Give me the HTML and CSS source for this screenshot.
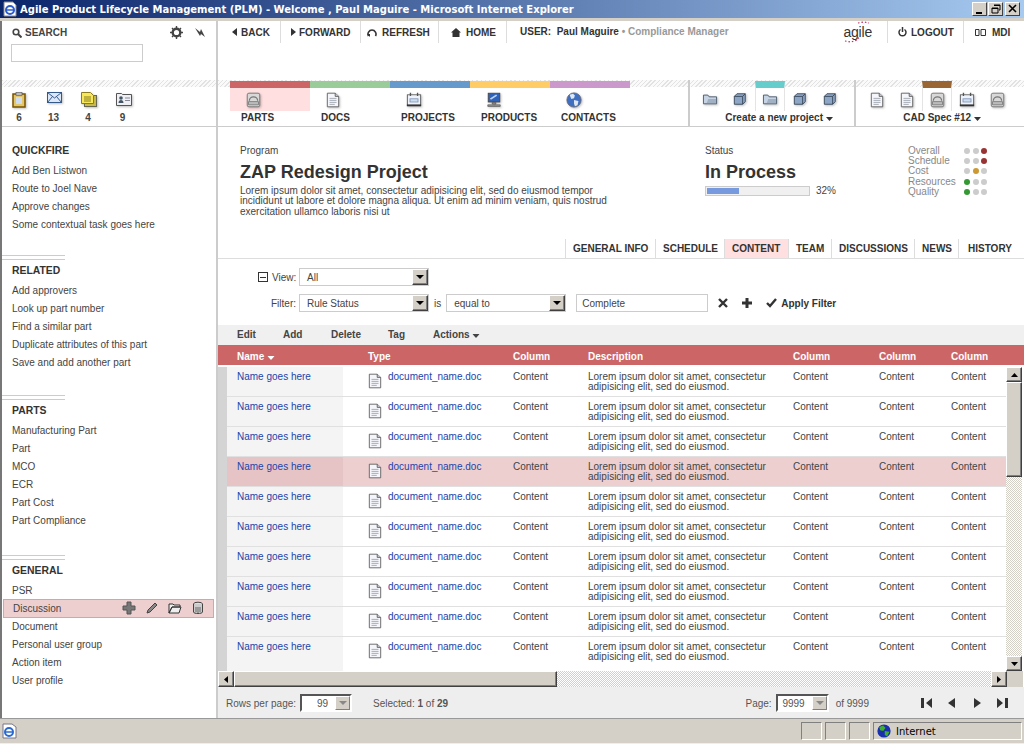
FILE: index.html
```html
<!DOCTYPE html>
<html>
  <head>
    <title>Agile Product Lifecycle Management (PLM)</title>
    <link rel="stylesheet" href="styles.css">
  </head>
  <body>
    <svg class="sprites" xmlns="http://www.w3.org/2000/svg">
      <symbol id="i-doc" viewBox="0 0 16 20" preserveAspectRatio="none">
        <path d="M1.500 1.500h9l4 4v13h-13z" fill="#f4f6fb" stroke="#555"/>
        <path d="M10.500 1.500v4h4" fill="#ccd" stroke="#555"/>
        <path d="M4 8h8M4 10.500h8M4 13h8M4 15.500h6" stroke="#9aa0aa"/>
      </symbol>
      <symbol id="i-disk" viewBox="0 0 18 20" preserveAspectRatio="none">
        <rect x="1.500" y="1.500" width="15" height="17" rx="2" fill="#d8d8d8" stroke="#666"/>
        <path d="M4 11a5 5 0 1 1 10 0" fill="none" stroke="#777" stroke-width="1.500"/>
        <path d="M3 12h12v4H3z" fill="#bbb" stroke="#777"/>
      </symbol>
      <symbol id="i-cal" viewBox="0 0 18 20" preserveAspectRatio="none">
        <rect x="1.500" y="3.500" width="15" height="14" fill="#eef3fb" stroke="#555"/>
        <rect x="4.500" y="8.500" width="9" height="4" fill="#cdddf0" stroke="#7f94b5"/>
        <path d="M5 1v4M13 1v4" stroke="#555" stroke-width="1.500"/>
        <path d="M1 16.500h16" stroke="#333" stroke-width="2"/>
      </symbol>
      <symbol id="i-monitor" viewBox="0 0 18 20" preserveAspectRatio="none">
        <rect x="2.500" y="1.500" width="13" height="11" fill="#2f62b8" stroke="#444"/>
        <path d="M5 9l7-5" stroke="#bcd2f2" stroke-width="2"/>
        <path d="M7 13h4v2H7zM2 16h14v2H2z" fill="#999" stroke="#444" stroke-width=".7"/>
      </symbol>
      <symbol id="i-globe" viewBox="0 0 18 18">
        <circle cx="9" cy="9" r="8" fill="#3f6fc0" stroke="#667"/>
        <path d="M4 3l4-1 2 2-1 3-3 1zM9 9l5 1-1 5-3 1-1-3z" fill="#dfe6f2"/>
      </symbol>
      <symbol id="i-folder" viewBox="0 0 18 16">
        <path d="M1.500 3.500h5l1.500 2h8.500v8h-15z" fill="#c6d3e4" stroke="#456"/>
        <path d="M7 8h9v5H5z" fill="#8a99ad" opacity=".6"/>
      </symbol>
      <symbol id="i-cube" viewBox="0 0 16 16">
        <path d="M1.500 5l3-3h9.500v9l-3 3H1.500z" fill="#8ea6c6" stroke="#345"/>
        <path d="M1.500 5h9.500v9M11 5l3-3" fill="none" stroke="#345"/>
      </symbol>
      <symbol id="i-arrow" viewBox="0 0 9 5"><path d="M0 0h9L4.500 5z" fill="currentColor"/></symbol>
    </svg>

    <div class="titlebar">
      <svg class="ie-mini" width="16" height="16" viewBox="0 0 16 16"><path d="M2 1h9l3 3v11H2z" fill="#fff" stroke="#888"/><circle cx="8" cy="9" r="4" fill="none" stroke="#2a5bd0" stroke-width="2"/><path d="M4 9h8" stroke="#2a5bd0" stroke-width="1.500"/></svg>
      <span class="title-text">Agile Product Lifecycle Management (PLM) - Welcome , Paul Maguire - Microsoft Internet Explorer</span>
      <div class="win-buttons">
        <span class="win-btn"><svg width="10" height="10"><path d="M1 8h6v2H1z" fill="#000"/></svg></span>
        <span class="win-btn"><svg width="10" height="10"><path d="M3 1h6v5H8M1 4h6v5H1zM3 1.500h6" fill="none" stroke="#000" stroke-width="1"/><path d="M1 4h6v1H1zM3 1h6v1H3z" fill="#000"/></svg></span>
        <span class="win-btn win-close"><svg width="10" height="10"><path d="M1 1l7 7M8 1L1 8" stroke="#000" stroke-width="1.600"/></svg></span>
      </div>
    </div>

    <div class="frame">
      <aside class="sidebar">
        <div class="search-box">
          <div class="search-head">
            <svg width="10" height="10" viewBox="0 0 10 10"><circle cx="4" cy="4" r="2.800" fill="none" stroke="#444" stroke-width="1.600"/><path d="M6 6l3.500 3.500" stroke="#444" stroke-width="2"/></svg>
            <span class="search-label">SEARCH</span>
            <svg class="gear" width="13" height="13" viewBox="0 0 13 13"><circle cx="6.500" cy="6.500" r="3.800" fill="none" stroke="#444" stroke-width="2.400"/><path d="M6.500 0v13M0 6.500h13M2 2l9 9M11 2l-9 9" stroke="#444" stroke-width="1.400" stroke-dasharray="2 9"/></svg>
            <svg class="pin" width="12" height="12" viewBox="0 0 12 12"><path d="M1 1l5 4 1-3 4 8-4-3-1 2z" fill="#444"/></svg>
          </div>
          <div class="search-input"></div>
        </div>
        <div class="hatch"></div>
        <div class="badges">
          <div class="badge">
            <svg width="14" height="16" viewBox="0 0 14 16"><rect x="1" y="2" width="12" height="13" fill="#e4c66a" stroke="#7a5200" stroke-width="1.500"/><rect x="4" y="5" width="6" height="7" fill="#cfdcf0"/><rect x="4" y="0.500" width="6" height="3" fill="#bbb" stroke="#555" stroke-width=".6"/></svg>
            <span>6</span>
          </div>
          <div class="badge">
            <svg width="15" height="12" viewBox="0 0 15 12"><rect x=".5" y=".5" width="14" height="10" fill="#dce8f8" stroke="#345a8c"/><path d="M.5.500l7 5.500 7-5.500M.5 10.500l5-6M14.500 10.500l-5-6" fill="none" stroke="#345a8c"/></svg>
            <span>13</span>
          </div>
          <div class="badge">
            <svg width="16" height="15" viewBox="0 0 16 15"><rect x="3.500" y="3.500" width="12" height="11" fill="#c8b84a" stroke="#665"/><path d="M.5.500h9l3 3v8H.5z" fill="#f6e85a" stroke="#8a7a20"/><path d="M3 5h7M3 7h7M3 9h7" stroke="#8a7a20"/></svg>
            <span>4</span>
          </div>
          <div class="badge">
            <svg width="16" height="14" viewBox="0 0 16 14"><path d="M.5 1.500h5l1 1h9v11H.5z" fill="#eef0f4" stroke="#555"/><circle cx="5" cy="6" r="1.800" fill="#456"/><path d="M2.500 11c0-4 5-4 5 0z" fill="#456"/><path d="M9 6h5M9 8.500h5" stroke="#889"/></svg>
            <span>9</span>
          </div>
        </div>

        <div class="side-nav">
          <section class="side-section">
            <h3>QUICKFIRE</h3>
            <a class="side-item">Add Ben Listwon</a>
            <a class="side-item">Route to Joel Nave</a>
            <a class="side-item">Approve changes</a>
            <a class="side-item">Some contextual task goes here</a>
          </section>
          <section class="side-section side-ruled side-related">
            <h3>RELATED</h3>
            <a class="side-item">Add approvers</a>
            <a class="side-item">Look up part number</a>
            <a class="side-item">Find a similar part</a>
            <a class="side-item">Duplicate attributes of this part</a>
            <a class="side-item">Save and add another part</a>
          </section>
          <section class="side-section side-ruled side-parts">
            <h3>PARTS</h3>
            <a class="side-item">Manufacturing Part</a>
            <a class="side-item">Part</a>
            <a class="side-item">MCO</a>
            <a class="side-item">ECR</a>
            <a class="side-item">Part Cost</a>
            <a class="side-item">Part Compliance</a>
          </section>
          <section class="side-section side-ruled">
            <h3>GENERAL</h3>
            <a class="side-item">PSR</a>
            <a class="side-item side-active">
              <span>Discussion</span>
              <span class="side-tools">
                <svg width="14" height="14" viewBox="0 0 14 14"><path d="M5 1h4v4h4v4H9v4H5V9H1V5h4z" fill="#777" stroke="#555"/></svg>
                <svg width="14" height="14" viewBox="0 0 14 14"><path d="M2 12l1-3 7-7 2 2-7 7z" fill="#888" stroke="#444"/></svg>
                <svg width="14" height="14" viewBox="0 0 14 14"><path d="M1 3h4l1 1h6v2H4l-3 6zM4 6h9l-2 6H1z" fill="#eee" stroke="#333"/></svg>
                <svg width="14" height="14" viewBox="0 0 14 14"><ellipse cx="7" cy="3" rx="4.500" ry="1.800" fill="#ddd" stroke="#444"/><path d="M2.500 3v8c0 2 9 2 9 0V3" fill="#ccc" stroke="#444"/><path d="M5 6v5M7 6v6M9 6v5" stroke="#666"/></svg>
              </span>
            </a>
            <a class="side-item">Document</a>
            <a class="side-item">Personal user group</a>
            <a class="side-item">Action item</a>
            <a class="side-item">User profile</a>
          </section>
        </div>
      </aside>

      <main class="content">
        <div class="topnav">
          <a class="top-link back"><svg width="5" height="8"><path d="M5 0v8L0 4z" fill="#333"/></svg>BACK</a>
          <a class="top-link forward"><svg width="5" height="8"><path d="M0 0v8l5-4z" fill="#333"/></svg>FORWARD</a>
          <a class="top-link refresh"><svg width="10" height="10" viewBox="0 0 10 10"><path d="M1.500 9a4 4 0 1 1 7 0" fill="none" stroke="#333" stroke-width="1.600"/><path d="M0 7h3v3z" fill="#333"/></svg>REFRESH</a>
          <a class="top-link home"><svg width="10" height="9" viewBox="0 0 10 9"><path d="M5 0l5 4.500H8.500V9h-7V4.500H0z" fill="#333"/></svg>HOME</a>
          <span class="user"><span class="user-key">USER:</span>  <b>Paul Maguire</b> <span class="user-role">&bull; Compliance Manager</span></span>
          <span class="logo">agile
            <svg class="logo-dots" width="30" height="22" viewBox="0 0 30 22"><path d="M16 2l6-1 5 1M3 20l6 1 6-2 3-4" fill="none" stroke="#c8245a" stroke-width="1.200" stroke-dasharray="1.500 2"/></svg>
          </span>
          <a class="top-link logout"><svg width="9" height="10" viewBox="0 0 9 10"><path d="M2.500 2.500a3.500 3.500 0 1 0 4 0" fill="none" stroke="#333" stroke-width="1.500"/><path d="M4.500 0v5" stroke="#333" stroke-width="1.500"/></svg>LOGOUT</a>
          <a class="top-link mdi"><svg width="11" height="7"><path d="M.5.500h3.500v6H.5zM6 .500h4.500v6H6z" fill="none" stroke="#333"/></svg>MDI</a>
        </div>

        <div class="modules">
          <div class="module-tabs">
            <a class="module module-active"><i class="band band-red"></i><span class="module-icon"><svg width="15" height="16"><use href="#i-disk"/></svg></span><b>PARTS</b></a>
            <a class="module"><i class="band band-green"></i><span class="module-icon"><svg width="14" height="16"><use href="#i-doc"/></svg></span><b>DOCS</b></a>
            <a class="module"><i class="band band-blue"></i><span class="module-icon"><svg width="16" height="16"><use href="#i-cal"/></svg></span><b>PROJECTS</b></a>
            <a class="module"><i class="band band-orange"></i><span class="module-icon"><svg width="16" height="16"><use href="#i-monitor"/></svg></span><b>PRODUCTS</b></a>
            <a class="module"><i class="band band-purple"></i><span class="module-icon"><svg width="16" height="16"><use href="#i-globe"/></svg></span><b>CONTACTS</b></a>
          </div>
          <div class="tool-group tool-create">
            <div class="tool-icons">
              <span class="tool"><svg width="16" height="14"><use href="#i-folder"/></svg></span>
              <span class="tool"><svg width="14" height="14"><use href="#i-cube"/></svg></span>
              <span class="tool tool-on tool-teal"><svg width="16" height="14"><use href="#i-folder"/></svg></span>
              <span class="tool"><svg width="14" height="14"><use href="#i-cube"/></svg></span>
              <span class="tool"><svg width="14" height="14"><use href="#i-cube"/></svg></span>
            </div>
            <div class="tool-label">Create a new project <svg width="7" height="4" viewBox="0 0 9 5"><use href="#i-arrow"/></svg></div>
          </div>
          <div class="tool-group tool-cad">
            <div class="tool-icons">
              <span class="tool"><svg width="14" height="16"><use href="#i-doc"/></svg></span>
              <span class="tool"><svg width="14" height="16"><use href="#i-doc"/></svg></span>
              <span class="tool tool-on tool-brown"><svg width="15" height="16"><use href="#i-disk"/></svg></span>
              <span class="tool"><svg width="16" height="16"><use href="#i-cal"/></svg></span>
              <span class="tool"><svg width="15" height="16"><use href="#i-disk"/></svg></span>
            </div>
            <div class="tool-label">CAD Spec #12 <svg width="7" height="4" viewBox="0 0 9 5"><use href="#i-arrow"/></svg></div>
          </div>
        </div>

        <div class="summary">
          <div class="summary-main">
            <div class="field-label">Program</div>
            <h1>ZAP Redesign Project</h1>
            <p>Lorem ipsum dolor sit amet, consectetur adipisicing elit, sed do eiusmod tempor incididunt ut labore et dolore magna aliqua. Ut enim ad minim veniam, quis nostrud exercitation ullamco laboris nisi ut</p>
          </div>
          <div class="summary-status">
            <div class="field-label">Status</div>
            <h1>In Process</h1>
            <div class="progress-line">
              <div class="progress"><div class="progress-fill" style="width: 32%"></div></div>
              <span>32%</span>
            </div>
          </div>
          <div class="health">
            <span>Overall</span><span class="dots"><i></i><i></i><i class="dot-red"></i></span>
            <span>Schedule</span><span class="dots"><i></i><i></i><i class="dot-red"></i></span>
            <span>Cost</span><span class="dots"><i></i><i class="dot-amber"></i><i></i></span>
            <span>Resources</span><span class="dots"><i class="dot-green"></i><i></i><i></i></span>
            <span>Quality</span><span class="dots"><i class="dot-green"></i><i></i><i></i></span>
          </div>
        </div>

        <div class="tabs">
          <a class="tab tab-general">GENERAL INFO</a>
          <a class="tab tab-schedule">SCHEDULE</a>
          <a class="tab tab-content tab-active">CONTENT</a>
          <a class="tab tab-team">TEAM</a>
          <a class="tab tab-discussions">DISCUSSIONS</a>
          <a class="tab tab-news">NEWS</a>
          <a class="tab tab-history">HISTORY</a>
        </div>

        <div class="filters">
          <div class="filter-row">
            <span class="collapse"></span>
            <span class="filter-key key-view">View:</span>
            <span class="select"><span class="select-value">All</span><span class="select-btn"></span></span>
          </div>
          <div class="filter-row">
            <span class="filter-key">Filter:</span>
            <span class="select"><span class="select-value">Rule Status</span><span class="select-btn"></span></span>
            <span class="filter-is">is</span>
            <span class="select select-op"><span class="select-value">equal to</span><span class="select-btn"></span></span>
            <span class="filter-input">Complete</span>
            <svg class="filter-x" width="10" height="10"><path d="M1 1l8 8M9 1L1 9" stroke="#333" stroke-width="2.400"/></svg>
            <svg class="filter-plus" width="10" height="10"><path d="M5 0v10M0 5h10" stroke="#333" stroke-width="3"/></svg>
            <svg class="filter-check" width="11" height="10"><path d="M1 5l3 3 6-7" fill="none" stroke="#333" stroke-width="2.400"/></svg>
            <b class="filter-apply">Apply Filter</b>
          </div>
        </div>

        <div class="actions">
          <a class="act-edit">Edit</a><a class="act-add">Add</a><a class="act-delete">Delete</a><a class="act-tag">Tag</a><a>Actions <svg width="8" height="4" viewBox="0 0 9 5"><use href="#i-arrow"/></svg></a>
        </div>

        <div class="thead">
          <span>Name <svg width="8" height="4" viewBox="0 0 9 5"><use href="#i-arrow"/></svg></span><span>Type</span><span>Column</span><span>Description</span><span>Column</span><span>Column</span><span>Column</span>
        </div>

        <div class="grid-wrap">
          <div class="rows">
            <div class="row"><a class="cell-name">Name goes here</a><span class="cell-type"><svg width="14" height="16"><use href="#i-doc"/></svg><a>document_name.doc</a></span><span>Content</span><span>Lorem ipsum dolor sit amet, consectetur adipisicing elit, sed do eiusmod.</span><span>Content</span><span>Content</span><span>Content</span></div>
            <div class="row"><a class="cell-name">Name goes here</a><span class="cell-type"><svg width="14" height="16"><use href="#i-doc"/></svg><a>document_name.doc</a></span><span>Content</span><span>Lorem ipsum dolor sit amet, consectetur adipisicing elit, sed do eiusmod.</span><span>Content</span><span>Content</span><span>Content</span></div>
            <div class="row"><a class="cell-name">Name goes here</a><span class="cell-type"><svg width="14" height="16"><use href="#i-doc"/></svg><a>document_name.doc</a></span><span>Content</span><span>Lorem ipsum dolor sit amet, consectetur adipisicing elit, sed do eiusmod.</span><span>Content</span><span>Content</span><span>Content</span></div>
            <div class="row row-selected"><a class="cell-name">Name goes here</a><span class="cell-type"><svg width="14" height="16"><use href="#i-doc"/></svg><a>document_name.doc</a></span><span>Content</span><span>Lorem ipsum dolor sit amet, consectetur adipisicing elit, sed do eiusmod.</span><span>Content</span><span>Content</span><span>Content</span></div>
            <div class="row"><a class="cell-name">Name goes here</a><span class="cell-type"><svg width="14" height="16"><use href="#i-doc"/></svg><a>document_name.doc</a></span><span>Content</span><span>Lorem ipsum dolor sit amet, consectetur adipisicing elit, sed do eiusmod.</span><span>Content</span><span>Content</span><span>Content</span></div>
            <div class="row"><a class="cell-name">Name goes here</a><span class="cell-type"><svg width="14" height="16"><use href="#i-doc"/></svg><a>document_name.doc</a></span><span>Content</span><span>Lorem ipsum dolor sit amet, consectetur adipisicing elit, sed do eiusmod.</span><span>Content</span><span>Content</span><span>Content</span></div>
            <div class="row"><a class="cell-name">Name goes here</a><span class="cell-type"><svg width="14" height="16"><use href="#i-doc"/></svg><a>document_name.doc</a></span><span>Content</span><span>Lorem ipsum dolor sit amet, consectetur adipisicing elit, sed do eiusmod.</span><span>Content</span><span>Content</span><span>Content</span></div>
            <div class="row"><a class="cell-name">Name goes here</a><span class="cell-type"><svg width="14" height="16"><use href="#i-doc"/></svg><a>document_name.doc</a></span><span>Content</span><span>Lorem ipsum dolor sit amet, consectetur adipisicing elit, sed do eiusmod.</span><span>Content</span><span>Content</span><span>Content</span></div>
            <div class="row"><a class="cell-name">Name goes here</a><span class="cell-type"><svg width="14" height="16"><use href="#i-doc"/></svg><a>document_name.doc</a></span><span>Content</span><span>Lorem ipsum dolor sit amet, consectetur adipisicing elit, sed do eiusmod.</span><span>Content</span><span>Content</span><span>Content</span></div>
            <div class="row"><a class="cell-name">Name goes here</a><span class="cell-type"><svg width="14" height="16"><use href="#i-doc"/></svg><a>document_name.doc</a></span><span>Content</span><span>Lorem ipsum dolor sit amet, consectetur adipisicing elit, sed do eiusmod.</span><span>Content</span><span>Content</span><span>Content</span></div>
          </div>
          <div class="vscroll">
            <span class="sb-btn"><svg width="7" height="4"><path d="M3.500 0L7 4H0z" fill="#000"/></svg></span>
            <span class="sb-thumb"></span>
            <span class="sb-track"></span>
            <span class="sb-btn"><svg width="7" height="4"><path d="M0 0h7L3.500 4z" fill="#000"/></svg></span>
          </div>
        </div>
        <div class="hscroll">
          <span class="sb-btn"><svg width="4" height="7"><path d="M4 0v7L0 3.500z" fill="#000"/></svg></span>
          <span class="sb-hthumb"></span>
          <span class="sb-htrack"></span>
          <span class="sb-btn"><svg width="4" height="7"><path d="M0 0v7l4-3.500z" fill="#000"/></svg></span>
          <span class="sb-corner"></span>
        </div>

        <div class="pager">
          <span class="rows-label">Rows per page:</span>
          <span class="combo combo-rows"><span>99</span><i class="combo-btn"></i></span>
          <span class="selected">Selected: <b>1</b> of <b>29</b></span>
          <span class="page-label">Page:</span>
          <span class="combo combo-page"><span>9999</span><i class="combo-btn"></i></span>
          <span class="page-of">of 9999</span>
          <span class="page-nav">
            <svg width="11" height="10"><path d="M0 0h3v10H0zM11 0v10L5 5z" fill="#333"/></svg>
            <svg width="7" height="10"><path d="M7 0v10L0 5z" fill="#333"/></svg>
            <svg class="nav-next" width="7" height="10"><path d="M0 0v10l7-5z" fill="#333"/></svg>
            <svg width="11" height="10"><path d="M8 0h3v10H8zM0 0v10l6-5z" fill="#333"/></svg>
          </span>
        </div>
      </main>
    </div>

    <div class="statusbar">
      <span class="status-ie">
        <svg width="15" height="16" viewBox="0 0 15 16"><path d="M1 1h9l4 3v11H1z" fill="#fff" stroke="#778"/><circle cx="7" cy="9" r="4" fill="none" stroke="#2a6ad0" stroke-width="2"/><path d="M3 9h8" stroke="#2a6ad0" stroke-width="1.500"/></svg>
      </span>
      <span class="status-fill"></span>
      <span class="status-cell"></span>
      <span class="status-cell"></span>
      <span class="status-cell"></span>
      <span class="status-zone">
        <svg width="14" height="14" viewBox="0 0 18 18"><circle cx="9" cy="9" r="8.500" fill="#1a2fb0"/><path d="M3 4l5-2 3 3-3 4-4-1zM10 9l6 1-3 6-3-2z" fill="#3fae2a"/></svg>
        Internet
      </span>
    </div>
  </body>
</html>
```

FILE: styles.css
```css
* {
  box-sizing: border-box;
}
html,
body {
  margin: 0;
  height: 744px;
  overflow: hidden;
}
body {
  width: 1024px;
  display: flex;
  flex-direction: column;
  background: #d4d0c8;
  font-family: "Liberation Sans", Arial, sans-serif;
  font-size: 10px;
  color: #444;
}
a {
  color: inherit;
}
svg {
  flex: none;
}
.sprites {
  display: none;
}

/* window chrome */
.titlebar {
  height: 18px;
  flex: none;
  display: flex;
  align-items: center;
  padding-left: 2px;
  background: linear-gradient(90deg, #0a246a, #a6caf0);
  color: #fff;
}
.title-text {
  margin-left: 2px;
  font-family: "DejaVu Sans", sans-serif;
  font-weight: bold;
  font-size: 10px;
  white-space: nowrap;
}
.win-buttons {
  margin-left: auto;
  margin-right: 4px;
  display: flex;
  gap: 1px;
}
.win-btn {
  width: 15px;
  height: 14px;
  display: flex;
  align-items: center;
  justify-content: center;
  background: #d4d0c8;
  border: 1px solid;
  border-color: #fff #404040 #404040 #fff;
}
.win-close {
  margin-left: 1px;
}
.frame {
  flex: none;
  height: 697px;
  margin-top: 3px;
  padding-left: 2px;
  padding-right: 2px;
  display: flex;
  background: #ececec;
  box-shadow: inset 2px 0 #777;
}

/* left column */
.sidebar {
  width: 214px;
  flex: none;
  background: #fff;
}
.search-box {
  height: 59px;
  padding: 6px 10px 0 9px;
}
.search-head {
  display: flex;
  align-items: center;
  height: 11px;
  gap: 3px;
  padding-left: 1px;
}
.search-label {
  font-weight: bold;
}
.gear {
  margin-left: auto;
  margin-right: 8px;
}
.search-input {
  width: 132px;
  height: 18px;
  margin-top: 6px;
  border: 1px solid #ccc;
}
.hatch {
  height: 7px;
  background: repeating-linear-gradient(135deg, #e2e2e2 0 1px, #fafafa 1px 3px);
}
.badges {
  height: 40px;
  display: flex;
  padding-left: 10px;
  border-bottom: 1px solid #ccc;
}
.badge {
  width: 34.500px;
  padding-top: 5px;
  display: flex;
  flex-direction: column;
  align-items: flex-start;
}
.badge svg,
.module-icon svg,
.tool svg {
  filter: drop-shadow(1px 1px 1px rgba(0, 0, 0, .25));
}
.badge span {
  margin-top: auto;
  margin-bottom: 3px;
  width: 14px;
  text-align: center;
  font-weight: bold;
}
.side-nav {
  padding-top: 14px;
}
.side-section {
  margin-bottom: 22px;
}
.side-related {
  margin-bottom: 24px;
}
.side-parts {
  margin-bottom: 26px;
}
.side-ruled::before {
  content: "";
  display: block;
  width: 63px;
  height: 3px;
  margin-bottom: 1px;
  border-top: 1px solid #ccc;
  border-bottom: 1px solid #ccc;
}
.side-section h3 {
  margin: 0;
  padding-left: 10px;
  font-size: 10.400px;
  line-height: 20px;
  color: #333;
}
.side-item {
  display: flex;
  align-items: center;
  height: 18px;
  padding-left: 10px;
}
.side-active {
  margin-left: 1px;
  width: 211px;
  height: 19px;
  margin-bottom: -1px;
  padding: 0 0 1px 9px;
  background: #eecfd0;
  border: 1px solid #d5a5a5;
}
.side-tools {
  margin-left: auto;
  display: flex;
  gap: 9px;
  padding-right: 8px;
}

/* main column */
.content {
  width: 806px;
  flex: none;
  display: flex;
  flex-direction: column;
  background: #fff;
  box-shadow: -2px 0 #ccc;
  margin-left: 2px;
}
.topnav {
  height: 59px;
  display: flex;
  align-items: flex-start;
  font-weight: bold;
  color: #333;
}
.top-link {
  height: 22px;
  display: flex;
  align-items: center;
  gap: 5px;
  border-right: 1px solid #ddd;
}
.back {
  width: 63px;
  padding-left: 14px;
  gap: 4px;
}
.forward {
  width: 80px;
  padding-left: 10px;
  gap: 3px;
}
.refresh {
  width: 78px;
  padding-left: 6px;
}
.home {
  width: 68px;
  padding-left: 12px;
}
.user {
  margin-left: 13px;
  line-height: 22px;
  white-space: pre;
}
.user-role {
  color: #999;
}
.logo {
  position: relative;
  margin-left: auto;
  margin-right: 15px;
  font-size: 14px;
  font-weight: normal;
  line-height: 22px;
  letter-spacing: -.2px;
}
.logo-dots {
  position: absolute;
  left: -1px;
  top: 0;
}
.logout {
  width: 77px;
  padding-left: 10px;
  gap: 4px;
  border-left: 1px solid #ddd;
}
.mdi {
  width: 60px;
  padding-left: 11px;
  gap: 6px;
  border: 0;
}
.modules {
  height: 47px;
  display: flex;
  background: repeating-linear-gradient(135deg, #e2e2e2 0 1px, #fafafa 1px 3px) 0 0 / 100% 7px no-repeat #fff;
  border-bottom: 1px solid #ccc;
}
.module-tabs {
  display: flex;
  margin-left: 12px;
  width: 458px;
}
.module {
  width: 80px;
  padding-top: 1px;
}
.module b {
  display: block;
  margin-left: 11px;
  margin-top: 1px;
  line-height: 12px;
  color: #333;
}
.band {
  display: block;
  height: 7px;
}
.band-red {
  background: #cc6666;
}
.band-green {
  background: #99cc99;
}
.band-blue {
  background: #6699cc;
}
.band-orange {
  background: #ffcc66;
}
.band-purple {
  background: #cc99cc;
}
.module-icon {
  display: flex;
  height: 23px;
  padding-left: 16px;
  padding-top: 4px;
}
.module-active .module-icon {
  background: #ffdfdf;
}
.tool-group {
  width: 166px;
  border-left: 2px solid #ccc;
}
.tool-cad {
  width: 168px;
}
.tool-icons {
  height: 31px;
  display: flex;
  padding-left: 5px;
}
.tool-cad .tool-icons {
  padding-left: 6px;
}
.tool {
  width: 30px;
  padding-top: 12px;
  display: flex;
  justify-content: center;
}
.tool-on {
  margin-top: 1px;
  border: solid #e4e4e4;
  border-width: 0 1px;
  border-top: 7px solid;
  padding-top: 4px;
}
.tool-teal {
  border-top-color: #66cccc;
}
.tool-brown {
  border-top-color: #996633;
}
.tool-label {
  margin-top: 1px;
  padding-left: 14px;
  text-align: center;
  font-weight: bold;
  line-height: 12px;
  color: #333;
}
.tool-cad .tool-label {
  padding-left: 6px;
}
.summary {
  height: 112px;
  display: flex;
  padding: 18px 0 0 22px;
}
.summary-main {
  width: 465px;
}
.summary-status {
  width: 203px;
}
.field-label {
  line-height: 12px;
}
h1 {
  margin: 4px 0 3px;
  font-size: 18px;
  line-height: 22px;
  color: #333;
}
.summary p {
  margin: 0;
  width: 375px;
  line-height: 10.400px;
}
.progress-line {
  display: flex;
  align-items: center;
  gap: 6px;
  margin-top: -1px;
}
.progress {
  width: 105px;
  height: 10px;
  padding: 1px;
  background: #f0f0f0;
  border: 1px solid #ccc;
}
.progress-fill {
  height: 100%;
  background: #7799dd;
}
.health {
  display: grid;
  grid-template-columns: 56px auto;
  justify-content: start;
  margin-top: 1px;
  line-height: 10.100px;
  height: 51px;
  color: #888;
}
.dots {
  display: flex;
  align-items: center;
  gap: 2.500px;
}
.dots i {
  width: 6px;
  height: 6px;
  border-radius: 50%;
  background: #ccc;
}
.dots .dot-red {
  background: #993333;
}
.dots .dot-amber {
  background: #cc9933;
}
.dots .dot-green {
  background: #339933;
}
.tabs {
  height: 20px;
  flex: none;
  display: flex;
  justify-content: flex-end;
  border-bottom: 1px solid #ddd;
  font-weight: bold;
  color: #333;
}
.tab {
  height: 19px;
  line-height: 20px;
  border-left: 1px solid #ddd;
  padding-left: 7px;
}
.tab-general {
  width: 90px;
}
.tab-schedule {
  width: 69px;
}
.tab-content {
  width: 64px;
}
.tab-team {
  width: 43px;
}
.tab-discussions {
  width: 83px;
}
.tab-news {
  width: 44px;
}
.tab-history {
  width: 66px;
  padding-left: 9px;
}
.tab-active {
  background: #ffdfdf;
}
.filters {
  height: 66px;
  padding-top: 9px;
  padding-left: 40px;
  display: flex;
  flex-direction: column;
  gap: 8px;
}
.filter-row {
  display: flex;
  align-items: center;
  height: 18px;
}
.collapse {
  width: 10px;
  height: 10px;
  margin-right: 4px;
  border: 1px solid #333;
  background: linear-gradient(#333, #333) center / 6px 1px no-repeat;
}
.filter-key {
  width: 38px;
  margin-right: 3px;
  padding-top: 1px;
  text-align: right;
}
.key-view {
  width: 24px;
}
.select {
  width: 130px;
  height: 18px;
  display: flex;
  align-items: stretch;
  border: 1px solid #ccc;
}
.select-value {
  flex: 1;
  padding-left: 7px;
  line-height: 17px;
}
.select-btn {
  width: 16px;
  background: #d4d0c8;
  border: 1px solid;
  border-color: #fff #404040 #404040 #fff;
  box-shadow: inset -1px -1px #808080;
  position: relative;
}
.select-btn::after {
  content: "";
  position: absolute;
  left: 3px;
  top: 5px;
  border: 4px solid transparent;
  border-top: 4px solid #000;
  border-bottom: 0;
}
.filter-is {
  margin: 0 5px;
  padding-top: 1px;
}
.select-op {
  width: 120px;
}
.filter-input {
  width: 132px;
  height: 18px;
  margin-left: 10px;
  padding-left: 5px;
  line-height: 17px;
  border: 1px solid #ccc;
}
.filter-x {
  margin-left: 10px;
}
.filter-plus {
  margin-left: 14px;
}
.filter-check {
  margin-left: 14px;
}
.filter-apply {
  margin-left: 4px;
  padding-top: 1px;
  color: #333;
}
.actions {
  height: 20px;
  flex: none;
  display: flex;
  align-items: center;
  padding: 0 0 2px 19px;
  background: #f0f0f0;
  font-weight: bold;
}
.act-edit {
  width: 46px;
}
.act-add {
  width: 48px;
}
.act-delete {
  width: 57px;
}
.act-tag {
  width: 45px;
}
.thead,
.row {
  display: grid;
  grid-template-columns: 116px 170px 75px 205px 86px 72px 1fr;
}
.thead {
  height: 20px;
  flex: none;
  align-items: center;
  padding: 3px 0 0 9px;
  background: #cc6666;
  color: #fff;
  font-weight: bold;
}
.thead span:first-child {
  padding-left: 10px;
}
.thead span:nth-child(2) {
  padding-left: 25px;
}
.grid-wrap {
  height: 306px;
  flex: none;
  display: flex;
  padding-top: 2px;
}
.rows {
  width: 788px;
  padding-left: 9px;
  background: linear-gradient(90deg, #d4d4d4 9px, #f4f4f4 9px 125px, #fff 125px);
}
.row {
  height: 30px;
  border-bottom: 1px solid #e0e0e0;
  background: #fff;
  padding-top: 5px;
  line-height: 10px;
}
.row:last-child {
  border-bottom-color: #fff;
}
.cell-name {
  margin-top: -5px;
  margin-bottom: -1px;
  padding: 5px 0 0 10px;
  background: #f4f4f4;
  border-bottom: 1px solid #e0e0e0;
  color: #2244aa;
}
.row:last-child .cell-name {
  border-bottom-color: #f4f4f4;
}
.cell-type {
  padding-left: 25px;
  display: flex;
  gap: 6px;
  color: #2244aa;
}
.cell-type svg {
  margin-top: 1px;
}
.row-selected {
  background: #eecfd0;
}
.row-selected .cell-name {
  background: #e6c4c5;
}
.vscroll {
  width: 16px;
  height: 304px;
  display: flex;
  flex-direction: column;
}
.sb-btn {
  width: 16px;
  height: 15px;
  flex: none;
  display: flex;
  align-items: center;
  justify-content: center;
  background: #d4d0c8;
  border: 1px solid;
  border-color: #fff #404040 #404040 #fff;
  box-shadow: inset -1px -1px #808080;
}
.sb-thumb {
  height: 95px;
  flex: none;
  background: #d4d0c8;
  border: 1px solid;
  border-color: #fff #404040 #404040 #fff;
  box-shadow: inset -1px -1px #808080;
}
.sb-track {
  flex: 1;
  background: repeating-conic-gradient(#d4d0c8 0 25%, #fff 0 50%) 0 0 / 2px 2px;
}
.hscroll {
  height: 16px;
  flex: none;
  display: flex;
}
.hscroll .sb-btn {
  height: 16px;
}
.sb-hthumb {
  width: 323px;
  background: #d4d0c8;
  border: 1px solid;
  border-color: #fff #404040 #404040 #fff;
  box-shadow: inset -1px -1px #808080;
}
.sb-htrack {
  width: 434px;
  background: repeating-conic-gradient(#d4d0c8 0 25%, #fff 0 50%) 0 0 / 2px 2px;
}
.sb-corner {
  width: 16px;
  background: #d4d0c8;
}
.pager {
  flex: 1;
  display: flex;
  align-items: center;
  padding: 1px 0 0 8px;
  background: #eeeeee;
  color: #555;
}
.rows-label {
  width: 70px;
  white-space: nowrap;
}
.combo {
  height: 18px;
  display: flex;
  align-items: center;
  justify-content: flex-end;
  background: #fff;
  border: 2px solid;
  border-color: #555 #fff #fff #555;
}
.combo-rows {
  width: 52px;
  margin-left: 4px;
}
.combo-page {
  width: 53px;
  margin-left: 4px;
}
.combo-btn {
  width: 15px;
  height: 14px;
  margin-left: 7px;
  position: relative;
  background: #d4d0c8;
  border: 1px solid;
  border-color: #fff #808080 #808080 #fff;
}
.combo-btn::after {
  content: "";
  position: absolute;
  left: 3px;
  top: 4px;
  border: 4px solid transparent;
  border-top: 4px solid #888;
  border-bottom: 0;
}
.selected {
  margin-left: 21px;
}
.page-label {
  margin-left: auto;
}
.page-of {
  margin-left: 7px;
  margin-right: 52px;
}
.page-nav {
  display: flex;
  align-items: center;
  gap: 16px;
  padding-right: 16px;
}
.nav-next {
  margin-left: 3px;
}

/* ie status bar */
.statusbar {
  height: 26px;
  flex: none;
  display: flex;
  align-items: center;
  gap: 3px;
  padding: 3px 2px 3px 2px;
  background: #d4d0c8;
  border-top: 1px solid #999;
  border-bottom: 1px solid #eee;
  font-family: "DejaVu Sans", sans-serif;
  font-size: 10px;
  color: #000;
}
.status-ie {
  height: 16px;
}
.status-fill {
  flex: 1;
}
.status-cell {
  width: 21px;
  height: 18px;
  border: 1px solid;
  border-color: #808080 #fff #fff #808080;
}
.status-zone {
  width: 149px;
  height: 18px;
  display: flex;
  align-items: center;
  gap: 5px;
  padding-left: 3px;
  border: 1px solid;
  border-color: #808080 #fff #fff #808080;
}
```
